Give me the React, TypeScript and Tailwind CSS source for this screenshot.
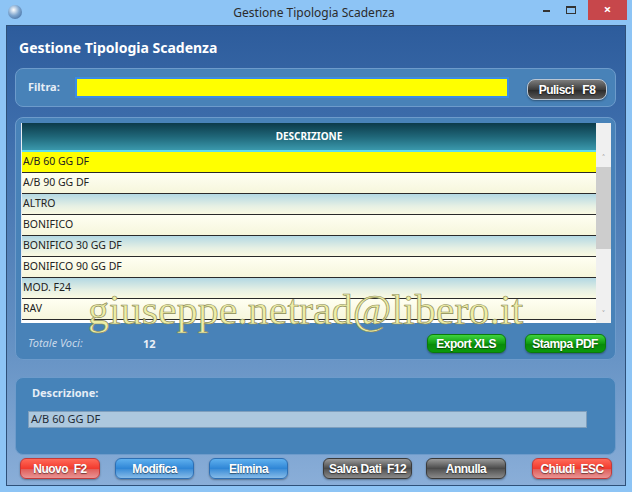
import React from "react";

const rows = [
  "A/B 60 GG DF",
  "A/B 90 GG DF",
  "ALTRO",
  "BONIFICO",
  "BONIFICO 30 GG DF",
  "BONIFICO 90 GG DF",
  "MOD. F24",
  "RAV",
];

const variants = {
  red: "border-[#c23a3a] bg-[linear-gradient(#ff6a58,#f23a2e_50%,#e0605c_55%,#e99494)]",
  blue: "border-[#2d6fb4] bg-[linear-gradient(#5fb0ee,#2f86d6_50%,#3f8fd8_55%,#86bbe8)]",
  gray: "border-[#3a3a3a] bg-[linear-gradient(#9a9a9a,#4a4a4a_50%,#555_55%,#8a8a8a)]",
  green: "border-[#0b7a0b] bg-[linear-gradient(#3fd43f,#0f9a0f_50%,#0a8a0a_55%,#0a9a0a)]",
  dark: "border-[#b9c6d4] bg-[linear-gradient(#7c7c7c,#3c3c3c_50%,#2c2c2c_55%,#5a5a5a)]",
};

function Btn({
  label,
  variant,
  className = "",
}: {
  label: string;
  variant: keyof typeof variants;
  className?: string;
}) {
  return (
    <div
      className={`flex items-center justify-center whitespace-pre rounded-[6px] border font-['Liberation_Sans',sans-serif] text-[12px] font-bold tracking-[-0.5px] text-white [text-shadow:0_1px_1px_rgba(0,0,0,0.5)] shadow-[0_1px_2px_rgba(0,0,0,0.35)] ${variants[variant]} ${className}`}
    >
      {label}
    </div>
  );
}

export default function App() {
  return (
    <div className="relative flex h-[492px] w-[632px] flex-col overflow-hidden bg-[#8dc4f5] font-['Noto_Sans','Liberation_Sans',sans-serif]">
      {/* Title bar */}
      <div className="relative flex h-[25px] shrink-0 items-center justify-center text-[12px] text-[#2b2b2b]">
        <div className="absolute left-[8px] top-[5px] h-[14px] w-[14px] rounded-full bg-[radial-gradient(circle_at_40%_35%,#ffffff,#7fa6cf_45%,#2f5c94)]" />
        <span className="pr-[4px]">Gestione Tipologia Scadenza</span>
        <div className="absolute right-[5px] top-0 flex h-[20px] items-center">
          <span className="mr-[16px] mt-[2px] h-[2px] w-[7px] bg-[#333]" />
          <span className="mr-[12px] h-[8px] w-[10px] border border-t-2 border-[#333]" />
          <div className="flex h-[20px] w-[39px] items-center justify-center bg-[#c7474b] text-[13px] font-bold text-white">
            ×
          </div>
        </div>
      </div>

      {/* Client area */}
      <div className="mx-[6px] mb-[6px] flex flex-1 flex-col border border-[#2e5079] bg-[linear-gradient(#2d5c9c,#3f6fad_25%,#6592c4_70%,#8aaed8)]">
        <div className="flex h-[42px] items-center pl-[12px] text-[14px] font-bold text-white">
          Gestione Tipologia Scadenza
        </div>

        {/* Filter */}
        <div className="ml-[8px] flex h-[39px] w-[601px] items-center rounded-[8px] border border-[#6d9bcb] bg-[#4882b8] pl-[12px]">
          <span className="w-[47px] text-[11px] font-bold text-[#e6eef6]">Filtra:</span>
          <div className="h-[21px] w-[434px] border-2 border-[#3b8ce4] bg-[#ffff00]" />
          <Btn label="Pulisci   F8" variant="dark" className="ml-[18px] mt-[4px] h-[21px] w-[80px] rounded-[8px]" />
        </div>

        {/* Grid panel */}
        <div className="ml-[8px] mt-[10px] flex h-[243px] w-[601px] flex-col rounded-[8px] border border-[#6d9bcb] bg-[#4882b8] px-[5px] pt-[5px]">
          <div className="flex h-[200px] w-[590px] overflow-hidden border-l border-[#e8eef4] bg-white">
            <div className="flex w-[575px] flex-col">
              <div className="flex h-[29px] shrink-0 items-center justify-center border-b-2 border-[#5fdcf0] bg-[linear-gradient(#0c3a49,#1f6678_50%,#3a98ac)] text-[10px] font-bold text-white">
                DESCRIZIONE
              </div>
              {rows.map((r, i) => (
                <div
                  key={r}
                  className={`flex h-[21px] shrink-0 items-center border-b border-[#2a2a2a] pl-[1px] text-[10.5px] text-[#222] ${
                    i === 0
                      ? "bg-[#ffff00]"
                      : i % 2 === 0
                        ? "bg-[linear-gradient(#b3d8e3,#e6f0e4_60%,#fafae2)]"
                        : "bg-[linear-gradient(#fffff2,#f6f6dc)]"
                  }`}
                >
                  {r}
                </div>
              ))}
            </div>
            <div className="flex w-[15px] flex-col items-center bg-[#f0f0f0]">
              <span className="mt-[29px] h-[12px] text-[9px] leading-[12px] text-[#888]">˄</span>
              <div className="mt-[3px] h-[82px] w-[15px] bg-[#cdcdcd]" />
              <div className="flex-1" />
              <span className="mb-[3px] h-[12px] text-[9px] leading-[12px] text-[#888]">˅</span>
            </div>
          </div>
          <div className="mt-[11px] flex items-center">
            <span className="ml-[7px] w-[115px] text-[11px] italic text-[#c9d9ea]">Totale Voci:</span>
            <span className="mt-[1px] text-[11px] font-bold text-[#e8eef6]">12</span>
            <Btn label="Export XLS" variant="green" className="ml-[271px] h-[19px] w-[79px]" />
            <Btn label="Stampa PDF" variant="green" className="ml-[19px] h-[19px] w-[81px]" />
          </div>
        </div>

        {/* Description panel */}
        <div className="ml-[8px] mt-[17px] flex h-[78px] w-[601px] flex-col rounded-[8px] border border-[#6d9bcb] bg-[#4683b9] pl-[12px]">
          <span className="mt-[7px] pl-[4px] text-[11px] font-bold text-[#e6eef6]">Descrizione:</span>
          <div className="mt-[9px] flex h-[17px] w-[559px] items-center border border-[#7f9fbd] bg-[#adc8de] pl-[2px] text-[11px] text-[#1e2a36]">
            A/B 60 GG DF
          </div>
        </div>

        {/* Bottom buttons */}
        <div className="mt-[3px] flex h-[21px] items-center">
          <Btn label="Nuovo  F2" variant="red" className="ml-[13px] h-[21px] w-[80px]" />
          <Btn label="Modifica" variant="blue" className="ml-[15px] h-[21px] w-[79px]" />
          <Btn label="Elimina" variant="blue" className="ml-[15px] h-[21px] w-[79px]" />
          <Btn label="Salva Dati  F12" variant="gray" className="ml-[35px] h-[21px] w-[89px]" />
          <Btn label="Annulla" variant="gray" className="ml-[14px] h-[21px] w-[80px]" />
          <Btn label="Chiudi  ESC" variant="red" className="ml-[26px] h-[21px] w-[80px]" />
        </div>
      </div>

      {/* Watermark */}
      <div className="pointer-events-none absolute left-[88px] top-[289px] font-['Liberation_Serif',serif] text-[42px] leading-[42px] text-[#eeeea6] [-webkit-text-stroke:0.7px_#8c8c58]">
        giuseppe.netrad@libero.it
      </div>
    </div>
  );
}
